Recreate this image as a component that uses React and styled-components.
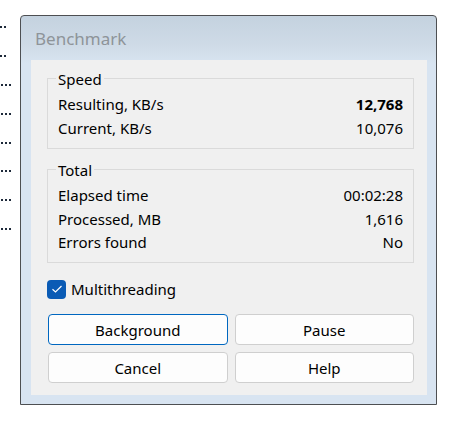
import React from "react";
import styled, { createGlobalStyle } from "styled-components";

const Global = createGlobalStyle`
  html, body { margin: 0; padding: 0; background: #ffffff; }
  body { font-family: "Noto Sans", "Open Sans", sans-serif; }
`;

const Page = styled.div`
  display: flex;
  width: 463px;
  height: 433px;
  overflow: hidden;
  background: #ffffff;
`;

const BackColumn = styled.div`
  width: 20px;
  display: flex;
  flex-direction: column;
  padding-top: 19px;
  overflow: hidden;
`;

const Ellipsis = styled.div`
  height: 28.9px;
  display: flex;
  align-items: flex-start;
  gap: 2px;
  padding-left: ${(p) => (p.$short ? "0" : "1px")};
  padding-top: 7px;
  box-sizing: border-box;
`;

const Dot = styled.span`
  width: 2px;
  height: 2px;
  background: #1e2a3a;
`;

const Window = styled.div`
  margin-top: 15px;
  width: 417px;
  height: 390px;
  box-sizing: border-box;
  border: 1px solid #4d4f52;
  border-radius: 4px 4px 0 0;
  background: linear-gradient(to bottom, #c4d2df 0px, #cfdbe7 30px, #d8e4f1 48px, #d8e4f1 100%);
  display: flex;
  flex-direction: column;
`;

const TitleBar = styled.div`
  height: 44px;
  display: flex;
  align-items: center;
  padding-left: 14px;
  padding-top: 1px;
  box-sizing: border-box;
  font-size: 17px;
  color: #8e9499;
`;

const Client = styled.div`
  flex: 1;
  margin: 0 9px 9px 10px;
  background: #f0f0f0;
  padding: 9px 13px 12px 16px;
  display: flex;
  flex-direction: column;
  color: #000;
  font-size: 15px;
`;

const Group = styled.fieldset`
  margin: 0 0 ${(p) => p.$gap || 0}px 0;
  padding: ${(p) => p.$pt}px 10px 8px 10px;
  border: 1px solid #dadada;
  min-width: 0;
`;

const Legend = styled.legend`
  padding: 0 2px;
  margin-left: -2px;
  font-size: 15px;
  line-height: 20px;
`;

const Row = styled.div`
  display: flex;
  justify-content: space-between;
  align-items: center;
  height: 23.5px;
`;

const Value = styled.span`
  font-weight: ${(p) => (p.$bold ? 700 : 400)};
`;

const CheckRow = styled.label`
  display: flex;
  align-items: center;
  gap: 5px;
  margin-top: 16px;
  height: 20px;
`;

const Box = styled.span`
  width: 19px;
  height: 19px;
  border-radius: 4px;
  background: #0a5bb5;
  display: flex;
  align-items: center;
  justify-content: center;
`;

const Buttons = styled.div`
  margin-top: 15px;
  display: grid;
  grid-template-columns: 1fr 1fr;
  gap: 7px;
  padding-left: 1px;
`;

const Button = styled.button`
  height: 31px;
  box-sizing: border-box;
  border-radius: 4px;
  border: 1px solid ${(p) => (p.$primary ? "#0067c0" : "#cfcfcf")};
  background: #fdfdfd;
  font-family: inherit;
  font-size: 15px;
  color: #000;
  padding: 0;
`;

const Check = () => (
  <svg width="12" height="10" viewBox="0 0 12 10">
    <path d="M1.5 5.2 L4.5 8 L10.5 2" fill="none" stroke="#fff" strokeWidth="1.2" />
  </svg>
);

const dots = [2, 2, 3, 3, 3, 3, 3, 3, 0, 0, 0, 0, 0, 0];

export default function App() {
  return (
    <Page>
      <Global />
      <BackColumn>
        {dots.map((n, i) => (
          <Ellipsis key={i} $short={n === 2}>
            {Array.from({ length: n }).map((_, j) => (
              <Dot key={j} />
            ))}
          </Ellipsis>
        ))}
      </BackColumn>
      <Window>
        <TitleBar>Benchmark</TitleBar>
        <Client>
          <Group $pt={4} $gap={11}>
            <Legend>Speed</Legend>
            <Row>
              <span>Resulting, KB/s</span>
              <Value $bold>12,768</Value>
            </Row>
            <Row>
              <span>Current, KB/s</span>
              <Value>10,076</Value>
            </Row>
          </Group>
          <Group $pt={4}>
            <Legend>Total</Legend>
            <Row>
              <span>Elapsed time</span>
              <Value>00:02:28</Value>
            </Row>
            <Row>
              <span>Processed, MB</span>
              <Value>1,616</Value>
            </Row>
            <Row>
              <span>Errors found</span>
              <Value>No</Value>
            </Row>
          </Group>
          <CheckRow>
            <Box>
              <Check />
            </Box>
            Multithreading
          </CheckRow>
          <Buttons>
            <Button $primary>Background</Button>
            <Button>Pause</Button>
            <Button>Cancel</Button>
            <Button>Help</Button>
          </Buttons>
        </Client>
      </Window>
    </Page>
  );
}
